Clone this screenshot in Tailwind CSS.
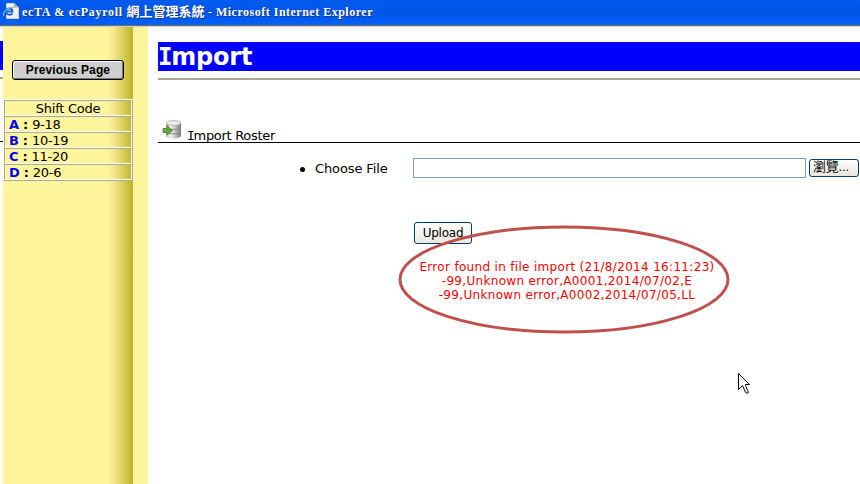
<!DOCTYPE html>
<html lang="zh-Hant">
<head>
<meta charset="utf-8">
<title>ecTA &amp; ecPayroll 網上管理系統</title>
<script src="https://cdn.jsdelivr.net/npm/@tailwindcss/browser@4"></script>
</head>
<body class="w-[860px] h-[484px] overflow-hidden bg-white relative flex flex-col text-black text-[13px] leading-4 font-['DejaVu_Sans','Noto_Sans_CJK_TC',sans-serif]">
<header class="h-[25px] shrink-0 flex bg-gradient-to-b from-[#005bf0] via-[#0055e5] to-[#0062fc] text-white">
  <svg class="w-[19px] h-[20px] ml-[2px] mt-[2px] shrink-0" viewBox="0 0 19 20">
    <path d="M4.500 1.500H12L16.500 5.500V16.500H4.500Z" fill="#f4f2e8" stroke="#d3cfc0"/>
    <path d="M12 1.500V5.500H16.500Z" fill="#aaa99e"/>
    <path d="M4 9.500H10.500C10.500 5.500 4.200 5.500 4 9.500C4 13.300 9 13.500 10.500 11.300" fill="none" stroke="#1268cf" stroke-width="1.800"/>
    <path d="M2 14C-.5 10.500 7 4 12 5.500" fill="none" stroke="#78b9f5" stroke-width="1.200"/>
  </svg>
  <h1 class="ml-px mt-[3px] whitespace-nowrap text-[12px] leading-[18px] font-bold tracking-[0.700px] font-['Liberation_Serif','Noto_Sans_CJK_TC',serif] [text-shadow:1px_1px_0_#10348c]">ecTA &amp; ecPayroll <span class="text-[13px] tracking-normal">網上管理系統</span><span class="tracking-[0.500px]"> - Microsoft Internet Explorer</span></h1>
</header>
<div class="h-[2px] shrink-0 bg-[#d4d0c4] border-t border-[#716f64]"></div>
<div class="flex flex-1 min-h-0">
  <div class="w-[3px] shrink-0 flex flex-col">
    <div class="mt-[14px] h-[29px] bg-[#0000ff]"></div>
    <div class="mt-[7px] h-[2px] bg-[#aca899]"></div>
    <div class="mt-[62px] h-px bg-black"></div>
  </div>
  <aside class="w-[145px] shrink-0 bg-[#fff59c]">
    <div class="w-[130px] h-full bg-[linear-gradient(to_right,#fff59c_104px,#f8ec90_109px,#ddd05f_119px,#c0b12c_130px)]">
      <div class="h-[33px]"></div>
      <button class="block ml-[9px] w-[112px] h-[20px] rounded-[3px] border border-black bg-[#cecece] shadow-[inset_1px_1px_0_#fff,inset_-1px_-1px_0_#777] text-[12px] leading-[18px] font-bold tracking-[0.120px] font-['Liberation_Sans',sans-serif] whitespace-nowrap">Previous Page</button>
      <div class="mt-[19px] w-[130px] h-[82px] border border-t-white border-l-white border-r-[#aca899] border-b-[#aca899] flex flex-col">
        <div class="h-4 border border-t-[#aca899] border-l-[#aca899] border-r-white border-b-white text-center leading-[15px] tracking-[-0.270px]">Shift Code</div>
        <div class="h-4 border border-t-[#aca899] border-l-[#aca899] border-r-white border-b-white pl-[4px] leading-[15px] whitespace-nowrap tracking-[-0.300px]"><b class="text-[#0000ff]">A</b><b> : </b>9-18</div>
        <div class="h-4 border border-t-[#aca899] border-l-[#aca899] border-r-white border-b-white pl-[4px] leading-[15px] whitespace-nowrap tracking-[-0.300px]"><b class="text-[#0000ff]">B</b><b> : </b>10-19</div>
        <div class="h-4 border border-t-[#aca899] border-l-[#aca899] border-r-white border-b-white pl-[4px] leading-[15px] whitespace-nowrap tracking-[-0.300px]"><b class="text-[#0000ff]">C</b><b> : </b>11-20</div>
        <div class="h-4 border border-t-[#aca899] border-l-[#aca899] border-r-white border-b-white pl-[4px] leading-[15px] whitespace-nowrap tracking-[-0.300px]"><b class="text-[#0000ff]">D</b><b> : </b>20-6</div>
      </div>
    </div>
  </aside>
  <main class="flex-1 min-w-0 pl-[10px] pt-[15px]">
    <h2 class="h-[29px] bg-[#0000ff] text-white text-[24px] leading-[31px] font-bold tracking-[-0.200px]"><span class="mr-[-1px] font-['DejaVu_Sans_Mono',monospace]">I</span>mport</h2>
    <div class="mt-[7px] h-[2px] bg-[#aca899]"></div>
    <div class="mt-[40px] h-[23px] border-b border-black flex">
      <svg class="ml-[4px] w-[20px] h-[20px] shrink-0" viewBox="0 0 20 20">
        <defs><linearGradient id="metal"><stop stop-color="#b5b5b5"/><stop offset=".3" stop-color="#f4f4f4"/><stop offset=".65" stop-color="#bdbdbd"/><stop offset="1" stop-color="#777"/></linearGradient></defs>
        <path d="M4 3V15.500C4 19.500 19 19.500 19 15.500V3Z" fill="url(#metal)"/>
        <ellipse cx="11.500" cy="3" rx="7.300" ry="2.400" fill="#ececec" stroke="#aaa" stroke-width=".8"/>
        <path d="M4 7.500C5 10 18 10 19 7.500M4 12C5 14.500 18 14.500 19 12" fill="none" stroke="#888" stroke-width="1"/>
        <path d="M1 8.500H5V5.500L10.500 10.500L5 15V12.500H1Z" fill="#63a63c" stroke="#3f7924" stroke-width=".7"/>
      </svg>
      <span class="ml-[6px] mt-[9px] h-[14px] leading-[14px] tracking-[-0.300px] whitespace-nowrap"><span class="-ml-px mr-[-1px] font-['DejaVu_Sans_Mono',monospace]">I</span>mport Roster</span>
    </div>
    <div class="flex h-[20px] mt-[15px]">
      <div class="ml-[142px] mt-[9px] size-[5px] rounded-full bg-black"></div>
      <label class="ml-[10px] mt-[3px] w-[98px] whitespace-nowrap tracking-[-0.120px]">Choose File</label>
      <div class="w-[393px] h-[20px] border border-[#7f9db9] bg-white"></div>
      <button class="ml-[3px] mt-px w-[50px] h-[18px] rounded-[3px] border border-[#003c74] bg-gradient-to-b from-white to-[#e7e4da] text-left pl-[3px] text-[13px] leading-[13px] whitespace-nowrap font-['Liberation_Sans','Noto_Sans_CJK_TC',sans-serif]"><span class="relative -top-[2px] tracking-[-0.200px]">瀏覽...</span></button>
    </div>
    <button class="block mt-[44px] ml-[256px] w-[58px] h-[22px] rounded-[3px] border border-[#003c74] bg-gradient-to-b from-white to-[#ece9e0] text-[12px] leading-[20px] tracking-[-0.250px]">Upload</button>
    <div class="mt-[16px] ml-[256px] w-[306px] text-center text-[#ff0000] text-[12px] leading-[14px] tracking-[0.320px] whitespace-nowrap">
      <p>Error found in file import (21/8/2014 16:11:23)</p>
      <p>-99,Unknown error,A0001,2014/07/02,E</p>
      <p>-99,Unknown error,A0002,2014/07/05,LL</p>
    </div>
  </main>
</div>
<svg class="absolute left-[398px] top-[225px] w-[332px] h-[109px]" viewBox="0 0 332 109"><ellipse cx="166" cy="54.500" rx="164" ry="52.500" fill="none" stroke="#c0504d" stroke-width="3"/></svg>
<svg class="absolute left-[738px] top-[373px] w-[13px] h-[22px]" viewBox="0 0 13 22"><path d="M.5.5V16.500L4.500 12.500L7.500 19.500Q9 21 10.500 19.500L7.500 12.500V11.500H11.500Z" fill="#fff" stroke="#000"/></svg>
</body>
</html>
